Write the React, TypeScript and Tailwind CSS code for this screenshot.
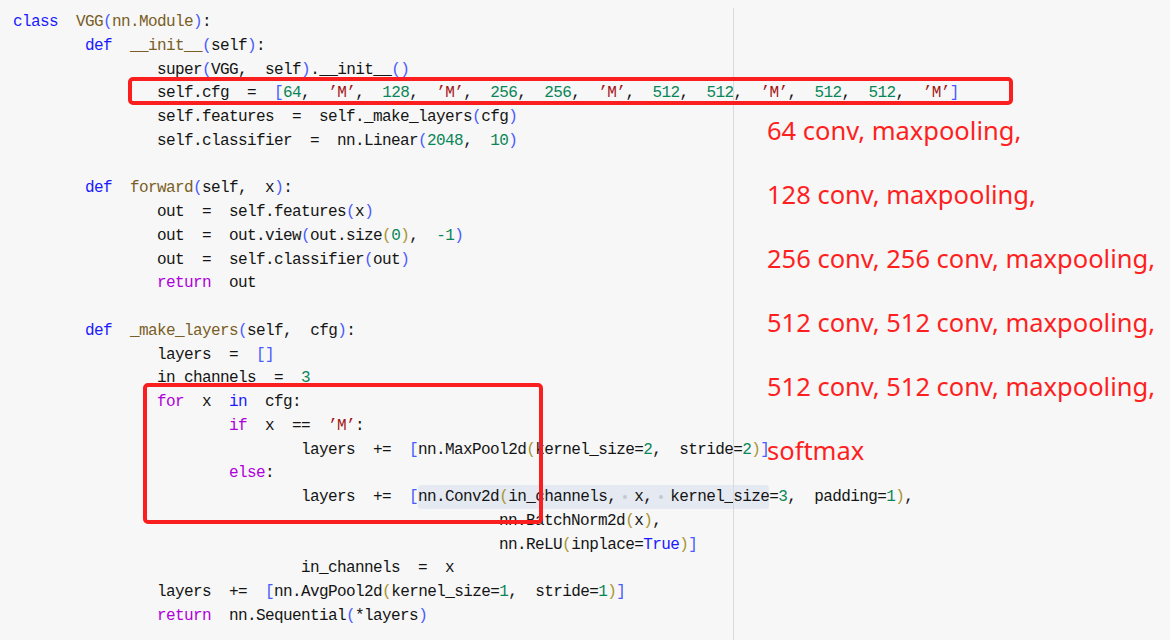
import React from "react";

type P = { children: React.ReactNode };
const K = ({ children }: P) => <span className="text-[#1a1aff]">{children}</span>;
const C = ({ children }: P) => <span className="text-[#af00db]">{children}</span>;
const F = ({ children }: P) => <span className="text-[#795e26]">{children}</span>;
const N = ({ children }: P) => <span className="text-[#098658]">{children}</span>;
const S = ({ children }: P) => <span className="text-[#a31515]">{children}</span>;
const B1 = ({ children }: P) => <span className="text-[#4a5cff]">{children}</span>;
const B2 = ({ children }: P) => <span className="text-[#a8962e]">{children}</span>;

const Dot = () => (
  <span className="relative">
    {"  "}
    <span className="absolute left-[7px] top-1/2 h-[4px] w-[4px] -translate-y-1/2 rounded-full bg-[#c4c8d0]" />
  </span>
);

const Line = ({ children }: { children?: React.ReactNode }) => (
  <div className="h-[23.76px] whitespace-pre leading-[23.76px]">{children ?? " "}</div>
);

const I8 = "        ";
const I16 = "                ";
const I24 = "                        ";
const I32 = "                                ";
const I54 = "                                                      ";

export default function App() {
  return (
    <div className="relative flex h-[640px] w-[1170px] overflow-hidden bg-[#f7f7f7]">
      <div className="w-[733px] shrink-0 pl-[13px] pt-[11px] font-['Liberation_Mono',monospace] text-[16px] tracking-[-0.6px] text-[#141414]">
        <Line>
          <K>class</K>{"  "}<F>VGG</F><B1>(</B1><F>nn.Module</F><B1>)</B1>:
        </Line>
        <Line>
          {I8}<K>def</K>{"  "}<F>__init__</F><B1>(</B1>self<B1>)</B1>:
        </Line>
        <Line>
          {I16}super<B1>(</B1>VGG,{"  "}self<B1>)</B1>.__init__<B1>()</B1>
        </Line>
        <Line>
          {I16}self.cfg{"  =  "}<B1>[</B1><N>64</N>,{"  "}<S>’M’</S>,{"  "}<N>128</N>,{"  "}<S>’M’</S>,{"  "}<N>256</N>,{"  "}<N>256</N>,{"  "}<S>’M’</S>,{"  "}<N>512</N>,{"  "}<N>512</N>,{"  "}<S>’M’</S>,{"  "}<N>512</N>,{"  "}<N>512</N>,{"  "}<S>’M’</S><B1>]</B1>
        </Line>
        <Line>
          {I16}self.features{"  =  "}self._make_layers<B1>(</B1>cfg<B1>)</B1>
        </Line>
        <Line>
          {I16}self.classifier{"  =  "}nn.Linear<B1>(</B1><N>2048</N>,{"  "}<N>10</N><B1>)</B1>
        </Line>
        <Line />
        <Line>
          {I8}<K>def</K>{"  "}<F>forward</F><B1>(</B1>self,{"  "}x<B1>)</B1>:
        </Line>
        <Line>
          {I16}out{"  =  "}self.features<B1>(</B1>x<B1>)</B1>
        </Line>
        <Line>
          {I16}out{"  =  "}out.view<B1>(</B1>out.size<B2>(</B2><N>0</N><B2>)</B2>,{"  "}<N>-1</N><B1>)</B1>
        </Line>
        <Line>
          {I16}out{"  =  "}self.classifier<B1>(</B1>out<B1>)</B1>
        </Line>
        <Line>
          {I16}<C>return</C>{"  "}out
        </Line>
        <Line />
        <Line>
          {I8}<K>def</K>{"  "}<F>_make_layers</F><B1>(</B1>self,{"  "}cfg<B1>)</B1>:
        </Line>
        <Line>
          {I16}layers{"  =  "}<B1>[]</B1>
        </Line>
        <Line>
          {I16}in_channels{"  =  "}<N>3</N>
        </Line>
        <Line>
          {I16}<C>for</C>{"  x  "}<K>in</K>{"  cfg:"}
        </Line>
        <Line>
          {I24}<C>if</C>{"  x  ==  "}<S>’M’</S>:
        </Line>
        <Line>
          {I32}layers{"  +=  "}<B1>[</B1>nn.MaxPool2d<B2>(</B2>kernel_size=<N>2</N>,{"  "}stride=<N>2</N><B2>)</B2><B1>]</B1>
        </Line>
        <Line>
          {I24}<C>else</C>:
        </Line>
        <Line>
          {I32}layers{"  +=  "}<B1>[</B1>
          <span className="rounded-[3px] bg-[#e5e9f1] py-[3px]">
            nn.Conv2d<B2>(</B2>in_channels,<Dot />x,<Dot />kernel_size
          </span>
          =<N>3</N>,{"  "}padding=<N>1</N><B2>)</B2>,
        </Line>
        <Line>
          {I54}nn.BatchNorm2d<B2>(</B2>x<B2>)</B2>,
        </Line>
        <Line>
          {I54}nn.ReLU<B2>(</B2>inplace=<K>True</K><B2>)</B2><B1>]</B1>
        </Line>
        <Line>
          {I32}in_channels{"  =  "}x
        </Line>
        <Line>
          {I16}layers{"  +=  "}<B1>[</B1>nn.AvgPool2d<B2>(</B2>kernel_size=<N>1</N>,{"  "}stride=<N>1</N><B2>)</B2><B1>]</B1>
        </Line>
        <Line>
          {I16}<C>return</C>{"  "}nn.Sequential<B1>(</B1>*layers<B1>)</B1>
        </Line>
      </div>

      <div className="mt-[8px] flex flex-1 flex-col border-l border-[#dadada] pl-[33px] pt-[90px] font-['Noto_Sans',sans-serif] text-[25.5px] leading-[64px] text-[#fe1f1f] whitespace-nowrap">
        <div>64 conv, maxpooling,</div>
        <div>128 conv, maxpooling,</div>
        <div>256 conv, 256 conv, maxpooling,</div>
        <div>512 conv, 512 conv, maxpooling,</div>
        <div>512 conv, 512 conv, maxpooling,</div>
        <div>softmax</div>
      </div>

      <div className="pointer-events-none absolute left-[128px] top-[77px] h-[28px] w-[885px] rounded-[5px] border-[4px] border-[#fa1e1e]" />
      <div className="pointer-events-none absolute left-[143px] top-[383px] h-[141px] w-[400px] rounded-[5px] border-[4px] border-[#fa1e1e]" />
    </div>
  );
}
